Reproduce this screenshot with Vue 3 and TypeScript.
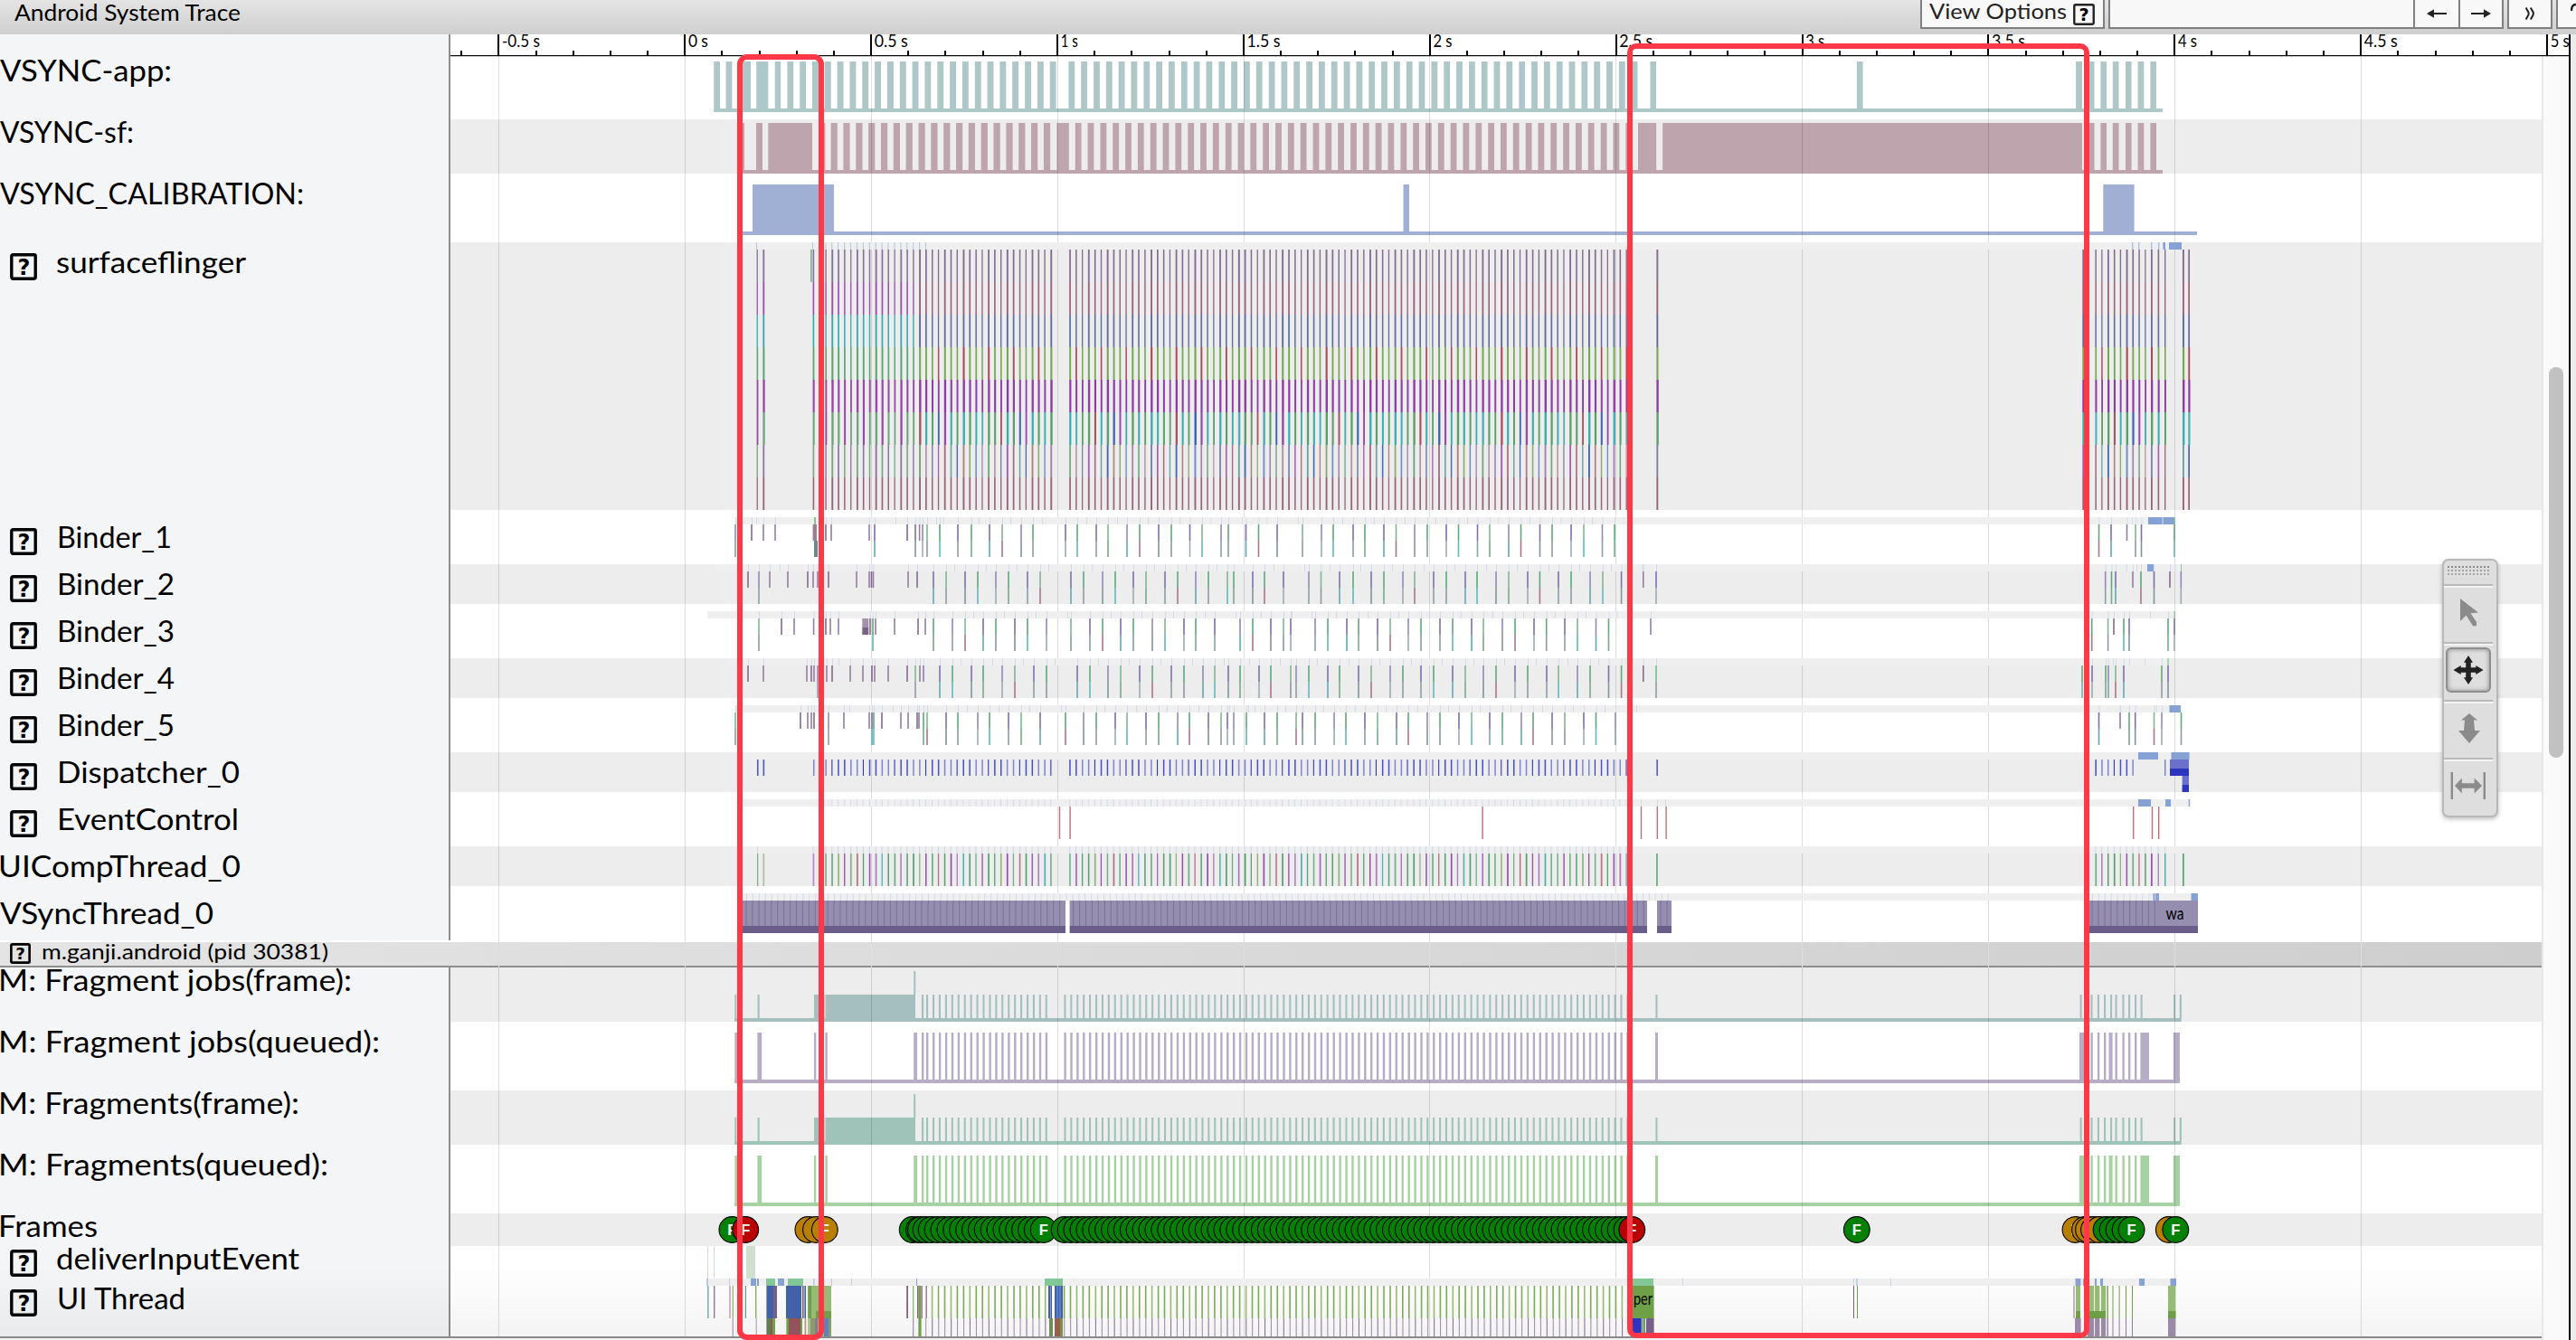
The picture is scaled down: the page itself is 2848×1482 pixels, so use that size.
<script setup lang="ts">
interface Row { label: string; x: number; end: number; h: number; base: number; icon?: boolean; grey?: boolean }

const vFit = {
  mounted(el: HTMLElement, binding: { value: number }) {
    const w = el.getBoundingClientRect().width
    if (w > 0) el.style.transform = `scaleX(${binding.value / w})`
  },
}

const topRows: Row[] = [
  { label: 'VSYNC-app:', x: 0, end: 190, h: 72, base: 30 },
  { label: 'VSYNC-sf:', x: 0, end: 148, h: 60, base: 26, grey: true },
  { label: 'VSYNC_CALIBRATION:', x: 0, end: 336, h: 76, base: 34 },
  { label: 'surfaceflinger', x: 62, end: 272, h: 296, base: 34, icon: true, grey: true },
  { label: 'Binder_1', x: 63, end: 190, h: 60, base: 42, icon: true },
  { label: 'Binder_2', x: 63, end: 193, h: 44, base: 34, icon: true, grey: true },
  { label: 'Binder_3', x: 63, end: 193, h: 60, base: 42, icon: true },
  { label: 'Binder_4', x: 63, end: 193, h: 44, base: 34, icon: true, grey: true },
  { label: 'Binder_5', x: 63, end: 193, h: 60, base: 42, icon: true },
  { label: 'Dispatcher_0', x: 63, end: 265, h: 44, base: 34, icon: true, grey: true },
  { label: 'EventControl', x: 63, end: 264, h: 60, base: 42, icon: true },
  { label: 'UICompThread_0', x: -2, end: 266, h: 44, base: 34, grey: true },
  { label: 'VSyncThread_0', x: 0, end: 236, h: 60, base: 42 },
]
const bottomRows: Row[] = [
  { label: 'M: Fragment jobs(frame):', x: -2, end: 389, h: 60, base: 26, grey: true },
  { label: 'M: Fragment jobs(queued):', x: -2, end: 420, h: 76, base: 34 },
  { label: 'M: Fragments(frame):', x: -2, end: 331, h: 60, base: 26, grey: true },
  { label: 'M: Fragments(queued):', x: -2, end: 363, h: 76, base: 34 },
  { label: 'Frames', x: -2, end: 108, h: 36, base: 26, grey: true },
  { label: 'deliverInputEvent', x: 62, end: 331, h: 36, base: 26, icon: true },
  { label: 'UI Thread', x: 63, end: 205, h: 64, base: 34, icon: true },
]

/* ---- drawing helpers: rectangles batched per colour ---- */
type Layer = Map<string, string>
const counters: Layer = new Map()
const slices: Layer = new Map()
function box(layer: Layer, c: string, x0: number, x1: number, y0: number, y1: number) {
  layer.set(c, (layer.get(c) ?? '') + `M${x0.toFixed(1)} ${y0}H${x1.toFixed(1)}V${y1}H${x0.toFixed(1)}z`)
}
function seq(start: number, step: number, end: number): number[] {
  const out: number[] = []
  for (let x = start; x <= end; x += step) out.push(x)
  return out
}

/* ---- VSYNC counters ---- */
const TEAL = '#aec8c9'
const ROSE = '#bda4ad'
const BLUE = '#a0b0d5'
const appBars: [number, number][] = [[789.2, 796], [802.6, 809.4], [821, 830], [836.2, 849.3], [856.7, 863.2], [870.4, 877.2], [884.2, 891], [898, 905]]
for (const x of seq(911.8, 13.83, 1165)) appBars.push([x, x + 6.9])
for (const x of seq(1181.4, 13.83, 1806)) appBars.push([x, x + 6.8])
appBars.push([1824.4, 1831], [2052.9, 2059.6])
const tailBars: [number, number][] = [[2308.7, 2315.5], [2322.4, 2329], [2335.8, 2342.5], [2350, 2356.6], [2363.6, 2370.3], [2377.4, 2384]]
appBars.push([2295.1, 2302], ...tailBars)
for (const [a, b] of appBars) box(counters, TEAL, a, b, 68, 120)
box(counters, TEAL, 789.2, 2391, 120, 124)

const sfBars: [number, number][] = [[821, 823], [836, 843], [849.3, 898], [911, 912.4]]
for (const x of seq(918.6, 13.84, 1156)) sfBars.push([x, x + 7.2])
sfBars.push([1168.4, 1181.8])
for (const x of seq(1188.8, 13.83, 1799)) sfBars.push([x, x + 6.8])
sfBars.push([1811, 1831.2], [1838.2, 2302], ...tailBars)
for (const [a, b] of sfBars) box(counters, ROSE, a, b, 136, 188)
box(counters, ROSE, 821, 2391, 188, 192)

box(counters, BLUE, 821, 2429, 256, 260)
box(counters, BLUE, 832, 922, 204, 256)
box(counters, BLUE, 1551.5, 1558, 204, 256)
box(counters, BLUE, 2325.3, 2359.6, 204, 256)

/* ---- fragment counters ---- */
const fragTicks = [1019, 1024, ...seq(1031, 6.93, 1157), ...seq(1176.4, 6.91, 1799)]
const fragTail = [2311.4, 2318.9, 2326, 2333, 2338.5, 2346.4, 2353, 2360]
function fragFrame(c: string, top: number) {
  box(counters, c, 812, 2411.7, top + 56, top + 60)
  for (const x of [812.3, 837.6, ...fragTicks, 1830.4, 2299.6, ...fragTail, 2366.6, 2403, 2409.8]) box(counters, c, x, x + 2.1, top + 30, top + 56)
  box(counters, c, 900, 911.7, top + 30, top + 56)
  box(counters, c, 912.5, 1012, top + 30, top + 56)
  box(counters, c, 1010.2, 1012.2, top + 4, top + 30)
}
function fragQueued(c: string, top: number) {
  box(counters, c, 812, 2410, top + 64, top + 68)
  const wide: [number, number][] = [[812.4, 815], [837.4, 842.2], [900, 902.3], [912.4, 914.8], [1010.2, 1014], [1830, 1833], [2299, 2306], [2331.5, 2335.6], [2366.4, 2376], [2402.8, 2410]]
  for (const [a, b] of wide) box(counters, c, a, b, top + 12, top + 64)
  for (const x of [...fragTicks, ...fragTail]) box(counters, c, x, x + 2.4, top + 12, top + 64)
}
fragFrame('#a5bfbf', 1070)
fragQueued('#b6acc6', 1130)
fragFrame('#9fc3b8', 1206)
fragQueued('#a6d1a2', 1266)

/* ---- slices ---- */
const STRIPE = '#efefef'
const RUN = '#86a1d4'
const WAKE = '#84c796'
const frames = [...seq(912.4, 6.915, 1163), ...seq(1182.2, 6.913, 1800)]
const tailFrames = [2316.4, 2323.2, 2330, 2336.9, 2343.7, 2350.6, 2357.4, 2364.3, 2371.2, 2378, 2385.6, 2393]

function stripe(y: number, x0: number, x1: number, ticks: number[], tint = '#d3dbea') {
  box(slices, STRIPE, x0, x1, y, y + 8)
  for (const x of ticks) if (x < x1) box(slices, tint, x, x + 1, y, y + 8)
}

stripe(268, 821, 2412, [836, 898, ...frames.filter(x => x < 1026)], '#b4c4e2')
for (const x of [2357, 2364, 2378, 2386]) box(slices, '#a9bde2', x, x + 1.4, 268, 276)
box(slices, RUN, 2391.4, 2394, 268, 276)
box(slices, RUN, 2398, 2412, 268, 276)

const deepMix = ['#57a067', '#3dacae', '#49b0b3', '#57a067', '#5f9f6c', '#a75560', '#3dacae', '#57a067', '#3d62b0', '#964aa8', '#3dacae', '#57a067', '#3dacae']
const deepMix2 = ['#a3697f', '#6f9fa0', '#4568b0', '#ab8379', '#8fab75', '#6c8cc0', '#a184ac', '#70a57e', '#b392a1', '#7d7fa6', '#a35cb0']
const sfCols = [836.6, 843.4, 898.6, ...frames, 1831.4, 2302.3, ...tailFrames, 2413, 2419.3]
sfCols.forEach((x, i) => {
  const early = x < 1010
  const w = 1.3 + ((i * 5) % 7) * 0.1
  const palette = early
    ? ['#88709a', '#9850ac', '#38a9ad', '#5aa572', '#9648a8', i % 3 ? '#6fa57c' : '#9648a8', i % 2 ? '#8a76a3' : '#7aa581', '#95667a']
    : ['#836c8f', '#97627b', '#5f6d9d', i % 4 === 1 ? '#a94a57' : '#76a852', '#8e3da6', deepMix[i % 13], deepMix2[i % 11], '#966378']
  palette.forEach((c, d) => {
    const extra = d === 4 || d === 5 ? 0.5 : d === 3 ? 0.2 : 0
    box(slices, c, x, x + w + extra, 276 + d * 36, 312 + d * 36)
  })
})
box(slices, '#63a779', 896.2, 897.6, 276, 312)

interface Binder { y: number; from: number; to: number; top: number[]; p: number[]; g: number[] }
const binders: Binder[] = [
  {
    y: 572, from: 813, to: 2404,
    top: [831, 844, 857, 913, 919, 961, 1003, 1016.6, 2351.5],
    p: [813, 967, 1012, 1020, 1059, 1094, 1129, 1178, 1212, 1246, 1281, 1315.5, 1350, 1377.5, 1412, 1461, 1496, 1530, 1564, 1599, 1633.5, 1668, 1702.5, 1737, 1771.5, 2334, 2367.5],
    g: [1025, 1039, 1074, 1108, 1142, 1191, 1225, 1260, 1295, 1329, 1358, 1391.5, 1440, 1474, 1509, 1543.5, 1578, 1612.5, 1647, 1681.5, 1716, 1751, 1785, 2320.5, 2361, 2404],
  },
  {
    y: 624, from: 789, to: 2411,
    top: [827, 851, 871, 893, 899, 904, 916, 947, 961, 963.5, 965.5, 1004, 1014, 1816.8, 2358, 2399],
    p: [839, 1032, 1067, 1101, 1136, 1184, 1219, 1253, 1288, 1322, 1385, 1419, 1447, 1481, 1516, 1551, 1585, 1620, 1654, 1689, 1723, 1758, 1792.6, 1831, 2327.7, 2339, 2381.5, 2411.3],
    g: [1046, 1081, 1115, 1150, 1198, 1233, 1267, 1302, 1336, 1357, 1364, 1398, 1460.5, 1496, 1530, 1564, 1599, 1633, 1668, 1702.4, 1737, 1772, 2334.5, 2367],
  },
  {
    y: 676, from: 782, to: 2404,
    top: [864, 878, 899.6, 913, 918, 927, 962, 968, 989, 1015, 1023, 1825, 2337],
    p: [1053, 1087, 1122, 1157, 1205, 1239, 1274, 1309, 1343, 1371, 1405, 1427, 1454, 1489, 1523, 1557, 1592, 1627, 1661, 1696, 1730, 1764.5, 2354, 2404],
    g: [839, 965, 1032, 1067, 1101, 1136, 1184, 1219, 1253, 1288, 1322, 1385, 1419, 1468, 1502, 1537, 1571, 1606, 1640, 1675, 1709.7, 1744, 1778.5, 2312.7, 2330.6, 2348, 2397],
  },
  {
    y: 728, from: 806, to: 2398,
    top: [827, 844, 892, 897, 900, 914, 920, 940, 954, 964, 967, 982, 1003, 1017, 1021, 1816.8],
    p: [904, 1039, 1074, 1108, 1143, 1191, 1225, 1260, 1295, 1330, 1358, 1392, 1433, 1468, 1502, 1537, 1571, 1606, 1640, 1675, 1710, 1744, 1778.5, 2313, 2331, 2348, 2397],
    g: [1012, 1053, 1087, 1122, 1157, 1205, 1239, 1274, 1309, 1343, 1371, 1405, 1427, 1447, 1481, 1516, 1551, 1585, 1620, 1654, 1689, 1723, 1758, 1792.6, 1831, 2302, 2328, 2339, 2390],
  },
  {
    y: 780, from: 813, to: 2411,
    top: [885, 893, 897, 900, 933, 961, 975, 996, 1004, 1014, 1016, 2344],
    p: [916, 964, 1046, 1081, 1115, 1150, 1198, 1233, 1267, 1302, 1336, 1357, 1364, 1398, 1440, 1475, 1509, 1544, 1578, 1613, 1647, 1682, 1716, 1751, 1786, 2320.5, 2360.7, 2390],
    g: [813, 966, 1021, 1025, 1059, 1094, 1129, 1178, 1212, 1246, 1281, 1315, 1350, 1378, 1412, 1433, 1454, 1488, 1523, 1557, 1592, 1627, 1661, 1695, 1730, 1764.5, 2354, 2381.5, 2411.5],
  },
]
const deepP = ['#87a0a6', '#62a9b3', '#7d959e', '#9aacb2']
const deepG = ['#8d9ba1', '#5fb8bd', '#79a98b', '#a8768b']
for (const b of binders) {
  const all = [...b.top, ...b.p, ...b.g].sort((m, n) => m - n)
  stripe(b.y, b.from, b.to, [...all, ...b.p.map(x => x + 23)].filter(x => x < 1832 || x > 2312))
  const y = b.y + 8
  b.top.forEach((x, i) => box(slices, i % 3 ? '#937da2' : '#84698e', x - 0.8, x + 0.8, y, y + 18))
  b.p.forEach((x, i) => {
    box(slices, i % 3 ? '#7d70ac' : '#9388b9', x - 0.8, x + 0.8, y, y + 18)
    box(slices, deepP[i % 4], x - 0.8, x + 0.8, y + 18, y + 36)
  })
  b.g.forEach((x, i) => {
    box(slices, i % 3 ? '#60a87a' : '#80b693', x - 0.8, x + 0.8, y, y + 18)
    box(slices, deepG[i % 4], x - 0.8, x + 0.8, y + 18, y + 36)
  })
}
box(slices, '#9a7d90', 898.6, 903, 580, 598)
box(slices, '#6b8790', 900, 904, 598, 616)
box(slices, '#a391ae', 953.3, 960.3, 684, 694)
box(slices, '#7a6087', 953.3, 960.3, 694, 702)
box(slices, RUN, 2375, 2404, 572, 580)
box(slices, WAKE, 2403.6, 2405, 572, 580)
box(slices, RUN, 2374, 2381, 624, 632)
box(slices, WAKE, 2411, 2412, 624, 632)
box(slices, WAKE, 2403.6, 2405, 676, 684)
box(slices, '#a5d9b1', 2396, 2398, 728, 736)
box(slices, RUN, 2398.5, 2411, 780, 788)
box(slices, WAKE, 900, 902, 572, 580)

/* Dispatcher_0 */
stripe(832, 821, 2400, [])
;[837, 843.6, 899, ...frames, 1831.4, ...tailFrames.slice(0, 7), 2393].forEach((x, i) =>
  box(slices, i % 5 < 2 ? '#4550c4' : i % 5 < 4 ? '#7e84d2' : '#3038bd', x, x + (i % 5 < 4 ? 1.5 : 1.1), 840, 858))
box(slices, RUN, 2364, 2386, 832, 840)
box(slices, RUN, 2400.5, 2420.6, 832, 840)
box(slices, '#6a70cc', 2399, 2420, 840, 850)
box(slices, '#2c35bf', 2399, 2420, 850, 858)
box(slices, '#6a70cc', 2412.6, 2420, 858, 868)
box(slices, '#2c35bf', 2412.6, 2420, 868, 876)

/* EventControl */
stripe(884, 821, 2420, [...frames.filter(x => x > 918), 1814, 1832, 1841])
for (const x of [1170.8, 1182.4, 1638.4, 1813.8, 1831.6, 1841.4, 2358, 2378.8, 2386]) box(slices, '#ba717d', x, x + 1.4, 892, 928)
box(slices, RUN, 2364, 2378, 884, 892)
box(slices, RUN, 2394, 2400, 884, 892)
box(slices, RUN, 2419.8, 2421.2, 884, 892)

/* UICompThread_0 */
stripe(936, 821, 2414, [837, 898.6, ...frames, ...tailFrames], '#cdd7e8')
const compMix = ['#57a06f', '#6fae84', '#a368b5', '#57a06f', '#57a06f', '#8fb37c', '#9450a6', '#6fae84', '#b0727f', '#57a06f', '#9450a6', '#a87bb8', '#4fb0b3']
;[837, 843.6, 898.6, ...frames, 1831.2, ...tailFrames, 2413].forEach((x, i) => {
  const c = i < 3 ? ['#7fb08c', '#9dbf9a', '#b48bc4'][i] : compMix[i % 13]
  box(slices, c, x, x + 1.3 + (i % 3) * 0.2, 944, 980)
})

/* VSyncThread_0 */
stripe(988, 821, 2430, [...seq(825, 6.93, 1846), ...seq(2313, 6.93, 2384)])
const vsyncRuns: [number, number][] = [[821, 1178], [1182.6, 1821], [1832, 1848], [2309, 2430]]
for (const [a, b] of vsyncRuns) {
  box(slices, '#968eae', a, b, 996, 1024)
  for (const x of seq(a + 3.5, 6.93, Math.min(b - 1, 2384))) box(slices, '#7d749c', x, x + 1.1, 996, 1024)
  box(slices, '#6a5d8a', a, b, 1024, 1032)
}
box(slices, RUN, 2380.5, 2387, 988, 996)
box(slices, RUN, 2422.5, 2430, 988, 996)

/* deliverInputEvent */
for (const [a, b] of [[782, 783], [789, 790], [825, 835]]) box(slices, '#cfe0cf', a, b, 1378, 1414)

/* UI Thread */
const GR = '#6f9f46'
const GL = '#96bb74'
stripe(1414, 781, 2405, [])
const states: [string, number, number][] = [
  ['#b9c8e6', 781, 783], ['#c3cfe8', 806, 807], [RUN, 830, 836], [RUN, 837, 839], [WAKE, 847, 857], [RUN, 860, 867], [WAKE, 871, 888], ['#b9c8e6', 899, 900.5],
  ['#b9c8e6', 919, 920], ['#c3cfe8', 941, 942], [RUN, 1013, 1014], [WAKE, 1155, 1175], [WAKE, 1805, 1828], ['#ccd6ea', 1860, 1861], ['#ccd6ea', 2049, 2050], ['#c3d3e6', 2052, 2054],
  ['#ccd6ea', 2090, 2091], [RUN, 2294.6, 2300.4], [RUN, 2303, 2305], [RUN, 2316, 2318], [RUN, 2322, 2325], [RUN, 2365, 2371], [RUN, 2399.5, 2406],
]
for (const [c, a, b] of states) box(slices, c, a, b, 1414, 1422)
const ui0: [string, number, number][] = [
  ['#7fb3ad', 782, 783.6], ['#8f78a0', 789, 790.4], ['#b0899c', 806.4, 807.6], ['#96bb74', 809.6, 811], ['#5a9a90', 823.8, 825], ['#86ad62', 835, 836.4],
  ['#4162a8', 847.4, 855], ['#76608a', 855, 859], ['#4162a8', 869, 886], ['#76608a', 887, 888.6], ['#4162a8', 889.4, 891], [GL, 893, 919], [GR, 893.6, 897],
  ['#83607c', 1002.2, 1004], [GL, 1009, 1010.4], ['#83607c', 1014, 1015], [GR, 1015.2, 1018.4], ['#8a5f78', 1018.6, 1019.8], ['#a3859a', 1023.4, 1025],
  ['#4162a8', 1159, 1163], ['#4162a8', 1166, 1175], [GR, 1805, 1828.6], ['#905a72', 2049, 2050], [GR, 2053, 2054],
  ['#a3859a', 2292.4, 2293.6], [GL, 2295, 2300], [GL, 2309.5, 2315], [GL, 2316, 2321.4], [GL, 2323, 2328], [GR, 2329.4, 2330.8], [GL, 2397, 2405.4],
]
for (const [c, a, b] of ui0) box(slices, c, a, b, 1422, 1458)
for (const [a, b] of [[902, 919], [2295, 2300], [2309.5, 2328], [2397, 2405.4]]) box(slices, '#6e9e45', a, b, 1450, 1458)
for (const x of [2335.5, 2342.6, 2350, 2357]) {
  box(slices, GR, x, x + 1, 1422, 1458)
  box(slices, '#8f78a0', x, x + 1, 1458, 1478)
}
;[...seq(1029.8, 6.95, 1156), ...seq(1175.8, 6.93, 1797)].forEach((x, i) => {
  box(slices, i % 3 ? '#7dab54' : GL, x, x + 1.6, 1422, 1458)
  box(slices, i % 3 ? '#a08fae' : '#8b739c', x + 0.4, x + 1.5, 1458, 1478)
})
const ui1: [string, number, number][] = [
  ['#b3a4bf', 809.6, 811], ['#b3a4bf', 835.6, 836.8], ['#5f7d52', 847.4, 852], ['#8a5a55', 852, 854], [GR, 854, 857], [GR, 869.4, 872], ['#94525c', 872, 885], [GR, 885, 887],
  ['#b98a80', 889.6, 891.2], ['#a9c394', 893, 896], ['#8b9c6a', 896, 901], ['#8d7796', 901, 904], [GL, 904, 911], ['#5f80bd', 911, 916], ['#7f9f6a', 916, 919],
  ['#8f78a0', 1009.2, 1010.2], [GR, 1015.4, 1018.6], ['#a08fae', 1023.2, 1024.2], ['#6d8f55', 1160, 1164], ['#96604f', 1166, 1172], ['#7c8f4c', 1172, 1175],
  ['#2c35bf', 1805, 1814.8], [GR, 1815.4, 1817], ['#5f8a62', 1817.4, 1819], ['#76608a', 1820, 1828.6],
  ['#9a8aa8', 2294, 2300.6], ['#9a8aa8', 2308, 2315], ['#9a8aa8', 2316, 2321.4], ['#9a8aa8', 2323, 2328], ['#8f78a0', 2329.4, 2330.8], ['#9a8aa8', 2397, 2405.4],
]
for (const [c, a, b] of ui1) box(slices, c, a, b, 1458, 1478)
for (const x of [1161, 1168.6, 1171.6]) box(slices, '#8fa8d8', x, x + 0.8, 1422, 1458)

/* ---- frame markers ---- */
const GOOD = '#048004'
const WARN = '#b87f00'
const BAD = '#b80000'
interface Dot { x: number; c: string; f: boolean }
const raw: [number, string][] = [[809.4, GOOD], [824.2, BAD], [893.4, WARN], [902, WARN], [911.8, WARN], [1008.7, GOOD], [1016, GOOD], [1018, GOOD], [1023.7, GOOD]]
for (const x of seq(1029.7, 6.89, 1154.5)) raw.push([x, GOOD])
for (const x of seq(1176.7, 6.91, 1800)) raw.push([x, GOOD])
raw.push([1804.3, BAD], [2052.8, GOOD], [2294.5, WARN], [2305, WARN], [2309, WARN], [2315, WARN], [2321, WARN], [2328.6, GOOD], [2335.6, GOOD], [2342.6, GOOD], [2349.6, GOOD], [2356.6, GOOD], [2397.8, WARN], [2405.3, GOOD])
const dots: Dot[] = raw.map(([x, c], i) => ({ x, c, f: i === raw.length - 1 || raw[i + 1][0] - x > 9.5 }))

/* ---- time axis ---- */
const majors = ['-0.5 s', '0 s', '0.5 s', '1 s', '1.5 s', '2 s', '2.5 s', '3 s', '3.5 s', '4 s', '4.5 s', '5 s'].map((t, i) => ({
  t,
  x: 551.4 + i * 205.88,
  w: [42, 22, 37, 19, 37, 21, 37, 21, 37, 21, 37, 21][i],
}))
const minors = seq(510.2, 41.176, 2838)
const gridXs = majors.slice(0, 11).map(m => Math.round(m.x - 0.4))
</script>

<template>
  <div class="app">
    <header class="bar">
      <div class="title"><span v-fit="250" class="t">Android System Trace</span></div>
      <div class="controls">
        <div class="btn options">
          <span v-fit="152" class="t">View Options</span>
          <svg class="opt-icon" width="24" height="24" viewBox="0 0 30 30">
            <rect x="1.6" y="1.6" width="26.8" height="26.8" rx="2" fill="none" stroke="#222" stroke-width="3" />
            <text x="15" y="24" text-anchor="middle" class="q">?</text>
          </svg>
        </div>
        <div class="btn search"></div>
        <div class="btn arrow">
          <svg width="24" height="12" viewBox="0 0 24 12"><path d="M1 6L9 1.2V4.9H23V7.1H9V10.8Z" fill="#222" /></svg>
        </div>
        <div class="btn arrow last">
          <svg width="24" height="12" viewBox="0 0 24 12"><path d="M23 6L15 1.2V4.9H1V7.1H15V10.8Z" fill="#222" /></svg>
        </div>
        <div class="btn more">
          <svg width="14" height="16" viewBox="0 0 14 16"><path d="M2.6 1.4L4.8 5.4Q6.6 8 4.8 10.6L2.6 14.6M7.8 1.4L10 5.4Q11.8 8 10 10.6L7.8 14.6" fill="none" stroke="#222" stroke-width="2" /></svg>
        </div>
        <div class="btn help">
          <svg width="6" height="12" viewBox="0 0 6 12"><path d="M1 9Q1 2 6 2" fill="none" stroke="#222" stroke-width="2.4" /></svg>
        </div>
      </div>
    </header>

    <div class="main">
      <div class="trace">
        <div class="axis-row"><div class="side"></div></div>
        <div v-for="r in topRows" :key="r.label" class="row" :class="{ grey: r.grey }" :style="{ height: r.h + 'px' }">
          <div class="side">
            <div class="label" :style="{ marginTop: r.base - 28 + 'px' }">
              <svg v-if="r.icon" class="icon" width="30" height="30" viewBox="0 0 30 30">
                <rect x="1.8" y="1.8" width="26.4" height="26.4" rx="1.6" fill="none" stroke="#000" stroke-width="3.4" />
                <text x="15.4" y="24" text-anchor="middle" class="q">?</text>
              </svg>
              <span v-fit="r.end - r.x" class="t" :style="{ marginLeft: (r.icon ? r.x - 41 : r.x) + 'px' }">{{ r.label }}</span>
            </div>
          </div>
        </div>
        <div class="process">
          <svg class="p-icon" width="23" height="23" viewBox="0 0 30 30">
            <rect x="1.8" y="1.8" width="26.4" height="26.4" rx="1.6" fill="none" stroke="#000" stroke-width="3.4" />
            <text x="15" y="24" text-anchor="middle" class="q">?</text>
          </svg>
          <span v-fit="317" class="t">m.ganji.android (pid 30381)</span>
        </div>
        <div v-for="r in bottomRows" :key="r.label" class="row" :class="{ grey: r.grey }" :style="{ height: r.h + 'px' }">
          <div class="side">
            <div class="label" :style="{ marginTop: r.base - 28 + 'px' }">
              <svg v-if="r.icon" class="icon" width="30" height="30" viewBox="0 0 30 30">
                <rect x="1.8" y="1.8" width="26.4" height="26.4" rx="1.6" fill="none" stroke="#000" stroke-width="3.4" />
                <text x="15.4" y="24" text-anchor="middle" class="q">?</text>
              </svg>
              <span v-fit="r.end - r.x" class="t" :style="{ marginLeft: (r.icon ? r.x - 41 : r.x) + 'px' }">{{ r.label }}</span>
            </div>
          </div>
        </div>
        <div class="shade"></div>
        <div class="foot"></div>
      </div>
      <div class="scroll"><div class="thumb"></div></div>
      <div class="edge"></div>

      <svg class="plot" width="2342" height="1444" viewBox="498 38 2342 1444">
        <path v-for="[c, d] in counters" :key="c" :d="d" :fill="c" />
        <rect v-for="x in gridXs" :key="x" :x="x" y="62" width="1" height="1416" fill="#000" fill-opacity="0.13" />
        <rect v-for="x in gridXs" :key="'h' + x" :x="x" y="1042" width="1" height="28" fill="#dedede" />
        <path v-for="[c, d] in slices" :key="c" :d="d" :fill="c" />
        <text x="2394.5" y="1016.5" class="slice" textLength="20" lengthAdjust="spacingAndGlyphs">wa</text>
        <text x="1806" y="1443" class="slice" textLength="21" lengthAdjust="spacingAndGlyphs">per</text>

        <g v-for="(d, i) in dots" :key="i">
          <circle :cx="d.x" cy="1360" r="14.4" :fill="d.c" stroke="#000" stroke-width="1.1" />
          <text v-if="d.f" :x="d.x" y="1366" text-anchor="middle" class="f">F</text>
        </g>

        <rect x="498" y="61" width="2342" height="1.2" fill="#000" />
        <rect v-for="x in minors" :key="'n' + x" :x="Math.round(x) - 1" y="56" width="2" height="6" fill="#000" />
        <template v-for="m in majors" :key="m.t">
          <rect :x="Math.round(m.x) - 1" y="38" width="2" height="24" fill="#000" />
          <text :x="m.x + 3.6" y="51.8" class="tick" :textLength="m.w" lengthAdjust="spacingAndGlyphs">{{ m.t }}</text>
        </template>

        <rect x="818" y="63" width="90" height="1416" rx="8" class="mark" />
        <rect x="1802" y="51" width="505" height="1426" rx="7" class="mark" />
      </svg>

      <div class="tools">
        <svg class="grip" width="48" height="14" viewBox="0 0 48 14">
          <template v-for="r in 3" :key="r">
            <rect v-for="c in 12" :key="c" :x="(c - 1) * 4" :y="(r - 1) * 4 + 1" width="2" height="2" :fill="['#8c8c8c', '#a4a4a4', '#a8a8a8'][r - 1]" />
          </template>
        </svg>
        <div class="tool">
          <svg width="50" height="50" viewBox="0 0 50 50"><path d="M16 10V35L22.6 28.4L30 40.2H34V36L27.4 26.2L36 25.4Z" fill="#8b8b8b" /></svg>
        </div>
        <div class="tool">
          <svg class="active" width="50" height="50" viewBox="0 0 50 50">
            <path d="M25 7.5L30.5 16H28V22H34V19.5L43 25L34 30.5V28H28V34H30.5L25 42.5L19.5 34H22V28H16V30.5L7 25L16 19.5V22H22V16H19.5Z" fill="#222" />
          </svg>
        </div>
        <div class="tool">
          <svg width="50" height="50" viewBox="0 0 50 50"><path d="M26 9L35 16.6H31L32 28H38L26 42L14 28H20L21 16.6H17Z" fill="#8b8b8b" /></svg>
        </div>
        <div class="tool">
          <svg width="50" height="50" viewBox="0 0 50 50"><path d="M5.6 10H8V40H5.6ZM41.6 10H44V40H41.6ZM10 25L17.8 16.6V22.2H31.6V16.6L40 25L31.6 33.6V27.8H17.8V33.6Z" fill="#8b8b8b" /></svg>
        </div>
      </div>
    </div>
  </div>
</template>

<style>
body { margin: 0; overflow: hidden; }
</style>

<style scoped>
.app {
  width: 2848px;
  height: 1482px;
  display: flex;
  flex-direction: column;
  overflow: hidden;
  background: #fff;
  color: #000;
  font-family: Lato, "Liberation Sans", sans-serif;
}
.t { display: inline-block; transform-origin: 0 50%; white-space: pre; flex: none; }
.q { font: bold 24px "DejaVu Sans", sans-serif; fill: #000; }
.bar {
  height: 38px;
  flex: none;
  display: flex;
  justify-content: space-between;
  align-items: flex-start;
  background: linear-gradient(#e4e4e4, #cfcfcf);
}
.title { padding: 1px 0 0 16px; font-size: 24.5px; line-height: 26px; }
.controls { display: flex; height: 32px; }
.btn {
  box-sizing: border-box;
  height: 32px;
  border: 2px solid #808080;
  border-top: 0;
  background: #f8f8f8;
  display: flex;
  align-items: center;
  justify-content: center;
  flex: none;
}
.options { width: 204px; margin-right: 4px; justify-content: flex-start; align-items: flex-start; padding-left: 8px; font-size: 24px; line-height: 24px; color: #222; position: relative; }
.opt-icon { position: absolute; left: 167px; top: 4px; }
.search { width: 339px; }
.arrow { width: 50px; border-left: 0; }
.arrow.last { width: 48px; margin-right: 4px; }
.more { width: 50px; margin-right: 4px; }
.help { width: 22px; border-right: 0; justify-content: flex-end; align-items: flex-start; padding-top: 3px; }
.main { flex: 1; display: flex; position: relative; }
.trace { width: 2810px; display: flex; flex-direction: column; position: relative; }
.row, .axis-row { display: flex; flex: none; }
.axis-row { height: 22px; }
.row.grey { background: #ededed; }
.side { box-sizing: border-box; width: 498px; height: 100%; background: #f4f5f7; border-right: 2px solid #8e8e8e; }
.label { display: flex; height: 32px; font-size: 32px; line-height: 32px; }
.icon { flex: none; margin-left: 11px; margin-top: 6px; }
.process {
  height: 26px;
  flex: none;
  margin-top: 2px;
  display: flex;
  border-bottom: 2px solid #8e8e8e;
  background: linear-gradient(90deg, #e4e4e4, #cecece);
  font-size: 24px;
  line-height: 24px;
}
.process .t { margin-left: 12px; margin-top: -2px; }
.p-icon { flex: none; margin: 1px 0 0 11px; }
.shade { position: absolute; left: 0; right: 0; bottom: 4px; height: 80px; background: linear-gradient(rgba(0, 0, 0, 0), rgba(0, 0, 0, 0.045)); }
.foot { height: 2px; flex: none; border-top: 2px solid #8a8a8a; background: #f2f2f2; }
.scroll { box-sizing: border-box; width: 30px; border-left: 2px solid #e8e8e8; background: #fafafa; margin-top: 24px; display: flex; }
.thumb { width: 16px; height: 432px; margin: 344px 0 0 6px; border-radius: 8px; background: #c1c1c1; }
.edge { box-sizing: border-box; width: 8px; border-left: 2px solid #000; background: #ececec; }
.plot { position: absolute; left: 498px; top: 0; }
.tick { font-size: 19px; fill: #000; }
.slice { font-size: 20px; fill: #000; }
.f { font: bold 16.5px "Liberation Sans", sans-serif; fill: #fff; }
.mark { fill: none; stroke: #fe3846; stroke-width: 6; }
.tools {
  position: absolute;
  left: 2700px;
  top: 580px;
  box-sizing: border-box;
  width: 62px;
  height: 286px;
  border: 2px solid #b8b8b8;
  border-radius: 7px;
  background: #dedede;
  box-shadow: 0 2px 5px rgba(0, 0, 0, 0.25);
}
.grip { display: block; margin: 5px 0 7px 4px; }
.tool { width: 54px; height: 62px; border-top: 2px solid #bababa; box-shadow: inset 0 2px 0 #f4f4f4; }
.tool svg { display: block; margin-left: 2px; transform: translateY(4px); }
.tool .active { box-sizing: border-box; border: 2px solid #8e8e8e; border-radius: 6px; box-shadow: inset 0 0 5px rgba(0, 0, 0, 0.4); background: #dedede; overflow: visible; }
</style>
